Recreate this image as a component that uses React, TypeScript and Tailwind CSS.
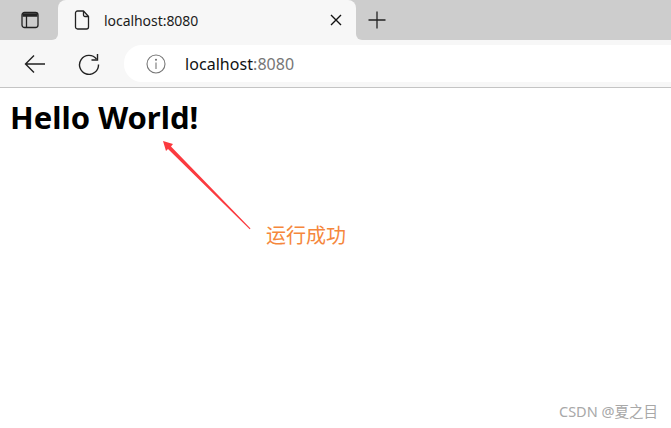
export default function App() {
  return (
    <div className="relative h-[428px] w-[671px] overflow-hidden bg-white font-['Open_Sans','Noto_Sans_CJK_SC',sans-serif]">
      <div className="flex h-10 items-stretch bg-[#f7f7f7]">
        <div className="flex w-[58px] items-center justify-center rounded-br-[6px] bg-[#cdcdcd] pl-px">
          <svg width="20" height="20" viewBox="0 0 20 20" fill="none" stroke="#222" strokeWidth="1.3">
            <rect x="2" y="2.500" width="16" height="15" rx="2.500" />
            <path d="M2.500 5h15" strokeWidth="3.500" />
            <path d="M6.500 6v11" />
          </svg>
        </div>
        <div className="w-[298px] bg-[#cdcdcd]">
          <div className="flex h-full items-center rounded-t-[8px] bg-[#f7f7f7] pl-[16px] pr-[14px]">
            <svg width="16" height="20" viewBox="0 0 16 20" fill="none" stroke="#222" strokeWidth="1.3" strokeLinejoin="round">
              <path d="M3.500 1h6l5 5.500V17a2 2 0 0 1-2 2h-9a2 2 0 0 1-2-2V3a2 2 0 0 1 2-2z" />
              <path d="M9.500 1v4a1.500 1.500 0 0 0 1.500 1.500h3.500" />
            </svg>
            <span className="ml-[14px] flex-1 text-[14px] tracking-[-0.05px] text-[#1c1c1c] font-['Noto_Sans',sans-serif]">localhost:8080</span>
            <svg width="12" height="12" viewBox="0 0 12 12" stroke="#111" strokeWidth="1.4">
              <path d="M1 1l10 10M11 1L1 11" />
            </svg>
          </div>
        </div>
        <div className="flex flex-1 items-center rounded-bl-[6px] bg-[#cdcdcd] pl-[11px]">
          <svg width="20" height="20" viewBox="0 0 20 20" stroke="#222" strokeWidth="1.3">
            <path d="M10 1.500v17M1.500 10h17" />
          </svg>
        </div>
      </div>
      <div className="flex h-[48px] items-center border-b border-[#c4c4c4] bg-[#f7f7f7]">
        <div className="flex w-[124px] items-center">
          <svg className="ml-[24px]" width="22" height="20" viewBox="0 0 22 20" fill="none" stroke="#222" strokeWidth="1.4">
            <path d="M21 10H1.500M10 1.500L1.500 10l8.500 8.500" />
          </svg>
          <svg className="ml-[32px]" width="22" height="22" viewBox="0 0 22 22" fill="none" stroke="#222" strokeWidth="1.4">
            <path d="M18.500 6A9.500 9.500 0 1 0 20.500 11.500" />
            <path d="M19.500 1v6h-6" />
          </svg>
        </div>
        <div className="flex h-[37px] flex-1 items-center rounded-l-[18px] bg-white pl-[22px]">
          <svg width="20" height="20" viewBox="0 0 20 20" fill="none" stroke="#777" strokeWidth="1.1">
            <circle cx="10" cy="10" r="9" />
            <path d="M10 8.500v6.500" />
            <circle cx="10" cy="5.800" r="0.500" fill="#777" />
          </svg>
          <span className="ml-[19px] text-[16px] tracking-[0.05px] font-['Noto_Sans',sans-serif] text-[#111]">
            localhost<span className="text-[#767676]">:8080</span>
          </span>
        </div>
      </div>
      <h1 className="ml-[10px] mt-[7px] text-[31px] font-bold leading-[44px] text-black font-['Noto_Sans',sans-serif]">Hello World!</h1>

      <svg className="absolute left-[155px] top-[132px]" width="105" height="105" viewBox="0 0 105 105">
        <path d="M8 9L18 12L16 14.500L95.500 96.500L94.700 97.300L13 17L11 19Z" fill="#fb3a3f" />
      </svg>
      <span className="absolute left-[266px] top-[223px] text-[20px] leading-6 text-[#f5873c] font-['Noto_Sans_CJK_SC',sans-serif]">运行成功</span>
      <span className="absolute left-[559px] top-[402px] text-[14.500px] leading-[18px] text-[#a8a8a8] font-['Noto_Sans','Noto_Sans_CJK_SC',sans-serif]">CSDN @夏之目</span>
    </div>
  );
}
